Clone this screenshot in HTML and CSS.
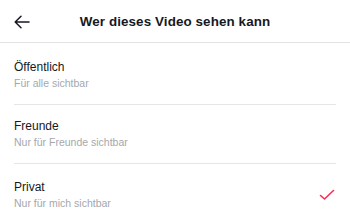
FILE: index.html
```html
<!DOCTYPE html>
<html lang="de">
<head>
<meta charset="utf-8">
<link rel="stylesheet" href="styles.css">
</head>
<body>
<div class="page">
  <header class="header">
    <span class="back">
      <svg width="16" height="14" viewBox="0 0 16 14" fill="none" stroke="#161823" stroke-width="1.5" stroke-linecap="round" stroke-linejoin="round">
        <path d="M15 7H1.5M7 1.2L1.2 7L7 12.8"/>
      </svg>
    </span>
    <h1 class="title">Wer dieses Video sehen kann</h1>
  </header>
  <ul class="list">
    <li class="row">
      <div class="texts">
        <div class="name">Öffentlich</div>
        <div class="desc">Für alle sichtbar</div>
      </div>
    </li>
    <li class="row">
      <div class="texts">
        <div class="name">Freunde</div>
        <div class="desc">Nur für Freunde sichtbar</div>
      </div>
    </li>
    <li class="row last">
      <div class="texts">
        <div class="name">Privat</div>
        <div class="desc">Nur für mich sichtbar</div>
      </div>
      <svg class="check" width="16" height="12" viewBox="0 0 16 12" fill="none" stroke="#fe2c55" stroke-width="1.6" stroke-linecap="round" stroke-linejoin="round">
        <path d="M1.5 6.5L5.5 10L14.5 1.5"/>
      </svg>
    </li>
  </ul>
</div>
</body>
</html>
```
FILE: styles.css
```css
* { box-sizing: border-box; }
html, body { margin: 0; padding: 0; background: #fff; }
body {
  font-family: "Liberation Sans", Arial, sans-serif;
  color: #161823;
  width: 350px;
  height: 221px;
  overflow: hidden;
}
.header {
  height: 43px;
  border-bottom: 1px solid #e3e3e4;
  display: flex;
  align-items: center;
  justify-content: center;
  position: relative;
}
.back {
  position: absolute;
  left: 14px;
  top: 15px;
  display: flex;
}
.title {
  margin: 0;
  font-size: 13.4px;
  font-weight: bold;
  letter-spacing: 0.1px;
}
.list {
  list-style: none;
  margin: 0;
  padding: 0 14px;
}
.row {
  display: flex;
  align-items: center;
  justify-content: space-between;
  padding: 14px 0 14px;
  border-bottom: 1px solid #e6e6e8;
}
.row:first-child { padding-top: 17px; }
.row.last { border-bottom: none; padding-top: 16px; }
.texts {
  display: flex;
  flex-direction: column;
}
.name {
  font-size: 12px;
  line-height: 15px;
}
.desc {
  font-size: 10.5px;
  line-height: 13px;
  color: #a6a7ab;
  margin-top: 2px;
}
.check {
  margin-right: 1px;
}
```
